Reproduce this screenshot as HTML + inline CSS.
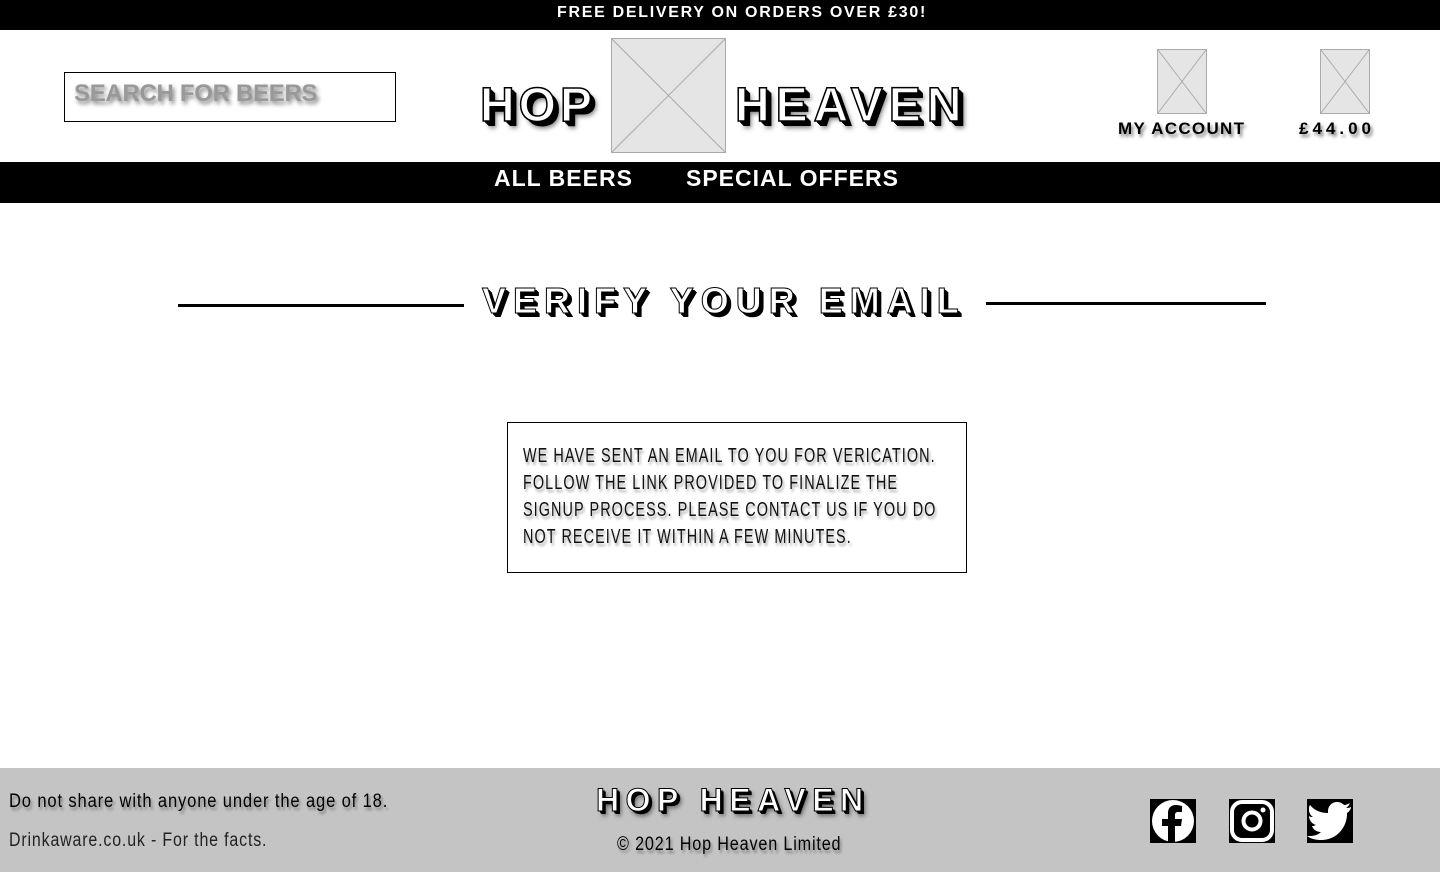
<!DOCTYPE html>
<html><head><meta charset="utf-8"><style>
*{margin:0;padding:0;box-sizing:border-box}
body{width:1440px;height:872px;position:relative;background:#fff;font-family:"Liberation Sans",sans-serif;overflow:hidden}
.abs{position:absolute}
.disp{font-family:"Liberation Sans",sans-serif;font-weight:bold;text-transform:uppercase;white-space:nowrap}
.outl{color:#fff;-webkit-text-stroke:1.5px #000;text-shadow:2px 2px 0 #000,3px 3px 0 #000,4px 4px 0 #000,5px 5px 0 #000,6px 7px 5px rgba(0,0,0,.5)}
.narrow{font-family:"Liberation Sans",sans-serif;white-space:nowrap;transform-origin:0 0}
.ph{position:absolute;background:#e5e5e5;border:1px solid #aaa}
.ph svg{position:absolute;left:0;top:0;width:100%;height:100%}
.bl div{height:27px}
</style></head><body>
<div class="abs" style="left:0;top:0;width:1440px;height:30px;background:#000"></div>
<div class="abs disp" style="left:0;top:4px;width:1484px;text-align:center;color:#fff;font-size:16px;letter-spacing:1.7px">Free delivery on orders over £30!</div>

<div class="abs" style="left:64px;top:72px;width:332px;height:50px;border:1px solid #000"></div>
<div class="abs disp" style="left:74px;top:80px;font-size:24px;color:#999;text-shadow:2px 3px 4px rgba(0,0,0,.5);letter-spacing:-0.3px">Search for beers</div>

<div class="abs disp outl" style="left:480px;top:78px;font-size:48px;letter-spacing:4px">Hop</div>
<div class="ph" style="left:611px;top:38px;width:115px;height:115px"><svg viewBox="0 0 115 115" preserveAspectRatio="none"><line x1="0" y1="0" x2="115" y2="115" stroke="#aaa"/><line x1="115" y1="0" x2="0" y2="115" stroke="#aaa"/></svg></div>
<div class="abs disp outl" style="left:735px;top:78px;font-size:48px;letter-spacing:6px">Heaven</div>

<div class="ph" style="left:1157px;top:49px;width:50px;height:65px"><svg viewBox="0 0 50 65" preserveAspectRatio="none"><line x1="0" y1="0" x2="50" y2="65" stroke="#aaa"/><line x1="50" y1="0" x2="0" y2="65" stroke="#aaa"/></svg></div>
<div class="ph" style="left:1320px;top:49px;width:50px;height:65px"><svg viewBox="0 0 50 65" preserveAspectRatio="none"><line x1="0" y1="0" x2="50" y2="65" stroke="#aaa"/><line x1="50" y1="0" x2="0" y2="65" stroke="#aaa"/></svg></div>
<div class="abs disp" style="left:1118px;top:119px;font-size:17px;text-shadow:2px 3px 3px rgba(0,0,0,.5);letter-spacing:1.3px">My account</div>
<div class="abs disp" style="left:1299px;top:119px;font-size:17px;text-shadow:2px 3px 3px rgba(0,0,0,.5);letter-spacing:4px">£44.00</div>

<div class="abs" style="left:0;top:162px;width:1440px;height:41px;background:#000"></div>
<div class="abs disp" style="left:494px;top:165px;font-size:23px;color:#fff;letter-spacing:1px">All beers</div>
<div class="abs disp" style="left:686px;top:165px;font-size:23px;color:#fff;letter-spacing:1px">Special offers</div>

<div class="abs" style="left:178px;top:304px;width:286px;height:3px;background:#000"></div>
<div class="abs" style="left:986px;top:302px;width:280px;height:3px;background:#000"></div>
<div class="abs disp" style="left:482px;top:280px;font-size:36px;letter-spacing:7px;color:#fff;-webkit-text-stroke:1px #000;text-shadow:2px 2px 0 #000,3px 3px 0 #000,4px 4px 0 #000">Verify your email</div>

<div class="abs" style="left:507px;top:422px;width:460px;height:151px;border:1px solid #000"></div>
<div class="abs narrow bl" style="left:523px;top:443px;font-size:20px;line-height:27px;letter-spacing:1.5px;text-transform:uppercase;color:#111;text-shadow:2px 3px 3px rgba(0,0,0,.35);transform:scaleX(0.72)">
<div>We have sent an email to you for verication.</div>
<div>Follow the link provided to finalize the</div>
<div>signup process. Please contact us if you do</div>
<div>not receive it within a few minutes.</div>
</div>

<div class="abs" style="left:0;top:768px;width:1440px;height:104px;background:#c4c4c4"></div>
<div class="abs narrow" style="left:9px;top:791px;font-size:19px;letter-spacing:1px;text-shadow:2px 3px 3px rgba(0,0,0,.35);transform:scaleX(0.87)">Do not share with anyone under the age of 18.</div>
<div class="abs narrow" style="left:9px;top:830px;font-size:19px;letter-spacing:1px;color:#222;transform:scaleX(0.84)">Drinkaware.co.uk - For the facts.</div>
<div class="abs disp outl" style="left:596px;top:782px;font-size:32px;letter-spacing:6.5px;-webkit-text-stroke:1px #000;text-shadow:2px 2px 0 #000,3px 3px 0 #000,4px 5px 4px rgba(0,0,0,.5)">Hop Heaven</div>
<div class="abs narrow" style="left:617px;top:834px;font-size:19px;letter-spacing:1px;text-shadow:2px 3px 3px rgba(0,0,0,.35);transform:scaleX(0.85)">© 2021 Hop Heaven Limited</div>

<svg class="abs" style="left:1150px;top:799px" width="46" height="44" viewBox="0 0 46 44"><rect width="46" height="44" fill="#000"/><circle cx="23" cy="22" r="21" fill="#fff"/><path d="M25 44V27h6l1-7h-7v-4c0-2 1-3 3-3h4V7c-1 0-3-1-6-1-5 0-8 3-8 8v6h-6v7h6v17z" fill="#000"/></svg>
<svg class="abs" style="left:1229px;top:799px" width="46" height="44" viewBox="0 0 46 44"><rect width="46" height="44" fill="#000"/><rect x="3" y="3" width="40" height="38" rx="10" fill="none" stroke="#fff" stroke-width="4"/><circle cx="23" cy="22" r="8.5" fill="none" stroke="#fff" stroke-width="4"/><circle cx="34" cy="11" r="2.5" fill="#fff"/></svg>
<svg class="abs" style="left:1307px;top:799px" width="46" height="44" viewBox="0 0 46 44"><rect width="46" height="44" fill="#000"/><path d="M44 8c-2 1-3 1-5 1 2-1 3-3 4-5-2 1-4 2-6 2-2-2-4-3-7-3-5 0-9 4-9 9 0 1 0 2 0 2C13 14 7 11 3 6c-1 1-1 3-1 5 0 3 2 6 4 7-1 0-3 0-4-1 0 4 3 8 7 9-1 0-2 1-2 1l-2 0c1 3 4 6 9 6-3 3-7 4-12 4h-2c4 3 9 4 14 4 17 0 26-14 26-26v-1c2-1 3-3 4-5z" fill="#fff"/></svg>
</body></html>
